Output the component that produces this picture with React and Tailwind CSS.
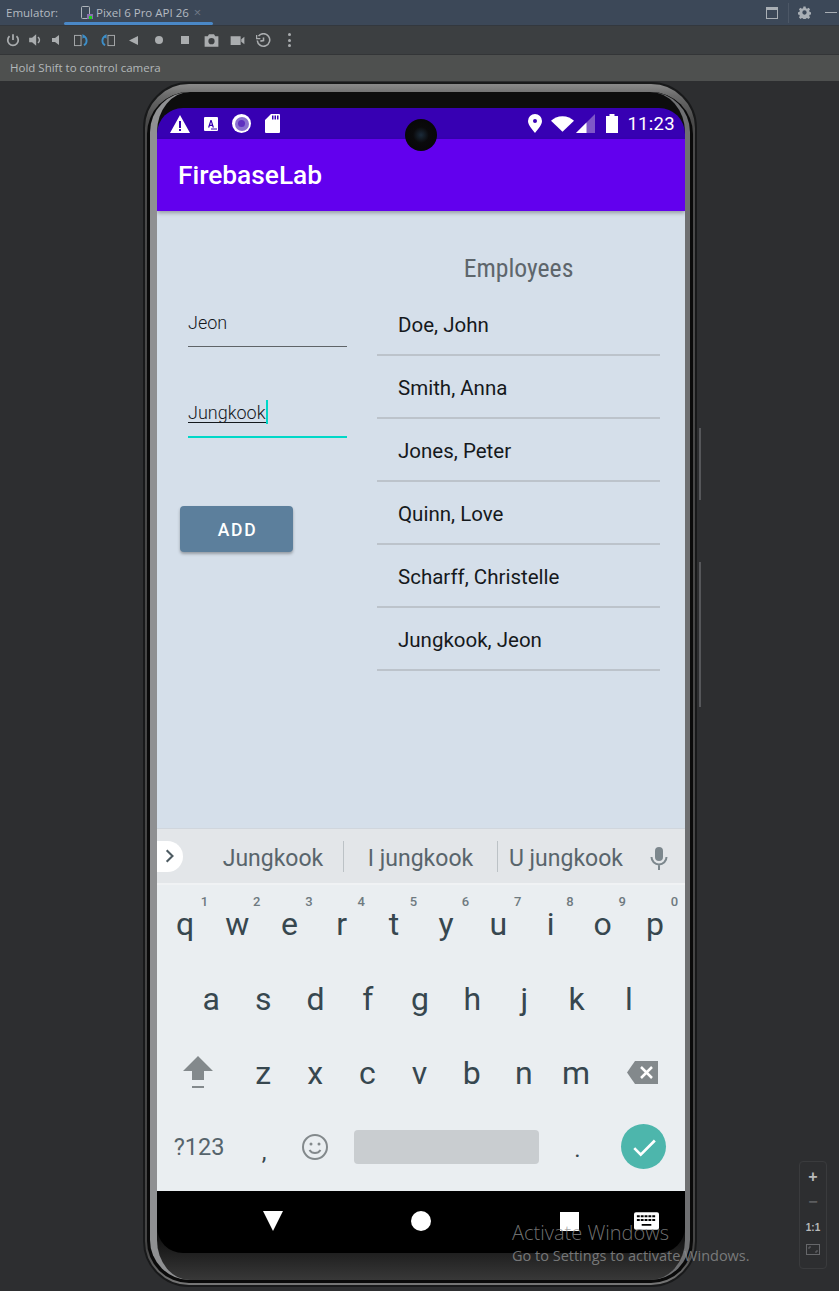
import React from 'react';

const KEYS_1 = [['q', 1], ['w', 2], ['e', 3], ['r', 4], ['t', 5], ['y', 6], ['u', 7], ['i', 8], ['o', 9], ['p', 0]];
const KEYS_2 = ['a', 's', 'd', 'f', 'g', 'h', 'j', 'k', 'l'];
const KEYS_3 = ['z', 'x', 'c', 'v', 'b', 'n', 'm'];
const EMPLOYEES = ['Doe, John', 'Smith, Anna', 'Jones, Peter', 'Quinn, Love', 'Scharff, Christelle', 'Jungkook, Jeon'];

function TopBars() {
  return (
    <div className="font-['Open_Sans',sans-serif]">
      <div className="h-[26px] bg-[#3c4858] border-b border-[#33383e] flex items-center text-[11.5px] text-[#b4bac1]">
        <span className="ml-[6px] w-[58px]">Emulator:</span>
        <div className="relative h-[25px] w-[149px] flex items-center pl-[16px]">
          <svg viewBox="0 0 14 14" className="w-[14px] h-[14px] text-[#aeb4ba]">
            <rect x="1.5" y="0.5" width="8" height="12" rx="1" fill="none" stroke="currentColor" />
            <rect x="7" y="8" width="6" height="5" fill="#8b6fb0" />
            <rect x="9" y="10" width="3" height="3" fill="#19d119" />
          </svg>
          <span className="ml-[2px] whitespace-nowrap">Pixel 6 Pro API 26</span>
          <span className="ml-[5px] text-[#6f7986] text-[13px] leading-none">×</span>
          <div className="absolute left-0 right-0 bottom-0 h-[3px] rounded-sm bg-[#4a88c7]" />
        </div>
        <div className="ml-auto flex items-center text-[#a9afb5]">
          <svg viewBox="0 0 12 12" className="w-[12px] h-[12px] mr-[10px]"><rect x="0.5" y="0.5" width="11" height="11" fill="none" stroke="currentColor" /><rect x="0" y="0" width="12" height="3" fill="currentColor" /></svg>
          <div className="w-px h-[20px] bg-[#4c5766] mr-[9px]" />
          <svg viewBox="0 0 24 24" className="w-[13px] h-[13px] mr-[14px]" fill="currentColor"><path fillRule="evenodd" d="M10 1h4l.6 3 2.2.9 2.6-1.700 2.900 2.900-1.700 2.600.9 2.200 3 .6v4l-3 .6-.9 2.200 1.700 2.600-2.900 2.900-2.600-1.700-2.200.9-.6 3h-4l-.6-3-2.200-.9-2.600 1.700-2.900-2.900 1.700-2.600-.9-2.200-3-.6v-4l3-.6.9-2.200-1.700-2.600 2.900-2.900 2.600 1.700 2.200-.9zM12 8a4 4 0 1 0 0 8 4 4 0 0 0 0-8z" /></svg>
          <div className="w-[12px] h-[1.5px] bg-current mr-[2px]" />
        </div>
      </div>
      <div className="h-[29px] bg-[#3c3f41] border-b border-[#333537] flex items-center pl-[2px] text-[#aaadaf]">
        <div className="w-[22px] flex justify-center">
          <svg viewBox="0 0 24 24" className="w-[14px] h-[14px]"><path d="M12 2v10M6 5.500a9 9 0 1 0 12 0" fill="none" stroke="currentColor" strokeWidth="3" /></svg>
        </div>
        <div className="w-[22px] flex justify-center">
          <svg viewBox="0 0 24 24" className="w-[14px] h-[14px]" fill="currentColor"><path d="M2 8h5l7-6v20l-7-6H2z" /><path d="M17 7a6 6 0 0 1 0 10" fill="none" stroke="currentColor" strokeWidth="2.500" /></svg>
        </div>
        <div className="w-[22px] flex justify-center">
          <svg viewBox="0 0 24 24" className="w-[12px] h-[14px]" fill="currentColor"><path d="M2 8h6l8-6v20l-8-6H2z" /></svg>
        </div>
        <div className="w-[26px] flex justify-center">
          <svg viewBox="0 0 16 14" className="w-[15px] h-[13px]"><rect x="0.5" y="1.500" width="7" height="11" fill="none" stroke="currentColor" /><path d="M10.500 2.500c4 1.500 4 8 0 9.500" fill="none" stroke="#3d8fc9" strokeWidth="2" /><path d="M9 0l3.500 2.500L9 5z" fill="#3d8fc9" /></svg>
        </div>
        <div className="w-[26px] flex justify-center">
          <svg viewBox="0 0 16 14" className="w-[15px] h-[13px]"><rect x="8.500" y="1.500" width="7" height="11" fill="none" stroke="currentColor" /><path d="M5.500 2.500c-4 1.500-4 8 0 9.500" fill="none" stroke="#3d8fc9" strokeWidth="2" /><path d="M7 0L3.500 2.500 7 5z" fill="#3d8fc9" /></svg>
        </div>
        <div className="w-[26px] flex justify-center"><svg viewBox="0 0 10 10" className="w-[9px] h-[9px]" fill="currentColor"><path d="M10 0v10L0 5z" /></svg></div>
        <div className="w-[26px] flex justify-center"><div className="w-[8px] h-[8px] rounded-full bg-current" /></div>
        <div className="w-[26px] flex justify-center"><div className="w-[8px] h-[8px] bg-current" /></div>
        <div className="w-[26px] flex justify-center">
          <svg viewBox="0 0 24 24" className="w-[15px] h-[15px]" fill="currentColor"><path fillRule="evenodd" d="M8 2h8l2 3h5v17H1V5h5zM12 8a5 5 0 1 0 0 10 5 5 0 0 0 0-10z" /></svg>
        </div>
        <div className="w-[26px] flex justify-center">
          <svg viewBox="0 0 24 24" className="w-[15px] h-[15px]" fill="currentColor"><path d="M1 5h16v14H1zM18 10l5-4v12l-5-4z" /></svg>
        </div>
        <div className="w-[26px] flex justify-center">
          <svg viewBox="0 0 24 24" className="w-[15px] h-[15px]" fill="none" stroke="currentColor" strokeWidth="2.500"><path d="M4 5a10 10 0 1 1-2 7" /><path d="M12 7v5l-5 1" /><path d="M1 3v6h6" strokeWidth="2" /></svg>
        </div>
        <div className="w-[26px] flex flex-col items-center gap-[2.5px]">
          <div className="w-[3px] h-[3px] rounded-full bg-current" />
          <div className="w-[3px] h-[3px] rounded-full bg-current" />
          <div className="w-[3px] h-[3px] rounded-full bg-current" />
        </div>
      </div>
      <div className="h-[26px] bg-[#4e504f] flex items-center pl-[10px] text-[11.5px] text-[#b3b8ba]">Hold Shift to control camera</div>
    </div>
  );
}

function StatusBar() {
  return (
    <div className="h-[31px] bg-[#3700b3] flex items-center text-white pl-[13px] pr-[10px]">
      <svg viewBox="0 0 20 18" className="w-[20px] h-[18px]" fill="white"><path fillRule="evenodd" d="M10 0l10 18H0zM9 6v7h2V6zM9 14v2h2v-2z" /></svg>
      <svg viewBox="0 0 14 14" className="w-[14px] h-[14px] ml-[14px]"><rect width="14" height="14" rx="1" fill="white" /><path d="M4 10.500L6.400 3h1.200L10 10.500H8.600L8.200 9H5.800l-.4 1.500zM6.200 7.800h1.600L7 5z" fill="#3700b3" /><rect x="7" y="11.500" width="6" height="1" fill="#3700b3" /></svg>
      <div className="w-[19px] h-[19px] rounded-full bg-white ml-[14px] flex items-center justify-center">
        <div className="w-[14px] h-[14px] rounded-full bg-[#8a6fd0] flex items-center justify-center"><div className="w-[7px] h-[7px] rounded-full bg-[#5f2fc0]" /></div>
      </div>
      <svg viewBox="0 0 15 19" className="w-[15px] h-[19px] ml-[14px]" fill="white"><path fillRule="evenodd" d="M6 0h8a1 1 0 0 1 1 1v17a1 1 0 0 1-1 1H1a1 1 0 0 1-1-1V6zM7 1.500v4h1.500v-4zM9.500 1.500v4H11v-4zM12 1.500v4h1.500v-4z" /></svg>
      <div className="ml-auto flex items-center">
        <svg viewBox="0 0 14 19" className="w-[14px] h-[19px]" fill="white"><path fillRule="evenodd" d="M7 0a7 7 0 0 1 7 7c0 4-4 8-7 12C4 15 0 11 0 7a7 7 0 0 1 7-7zM7 5a2 2 0 1 0 0 4 2 2 0 0 0 0-4z" /></svg>
        <svg viewBox="0 0 24 16" className="w-[23px] h-[16px] ml-[9px]" fill="white"><path d="M0 4.500C3 2 7 0 12 0s9 2 12 4.500L12 16z" /></svg>
        <svg viewBox="0 0 19 19" className="w-[19px] h-[19px] ml-[2px]"><path d="M19 0v19H0z" fill="#7e57c8" /><path d="M10.500 8.500V19H0z" fill="white" /></svg>
        <svg viewBox="0 0 12 19" className="w-[12px] h-[19px] ml-[11px]" fill="white"><path d="M3.500 0h5v2H12v17H0V2h3.500z" /></svg>
        <span className="ml-[9px] pt-[2px] font-['Roboto',sans-serif] text-[18.500px] leading-none tracking-[0.3px]">11:23</span>
      </div>
    </div>
  );
}

function AppContent() {
  return (
    <div className="h-[617px] bg-[#d5dfea] flex font-['Roboto',sans-serif]">
      <div className="w-[220px] shrink-0">
        <div className="ml-[31px] mt-[92px] w-[159px] h-[44px] border-b border-[#5f6468] flex items-end pb-[14px] text-[18px] font-light text-[#14181c] leading-none">Jeon</div>
        <div className="ml-[31px] mt-[46px] w-[159px] h-[45px] border-b-2 border-[#00d8c8] flex items-end pb-[13px] text-[18px] font-light text-[#14181c] leading-none">
          <span className="border-b border-[#14181c]">Jungkook</span>
          <span className="w-[2px] h-[24px] bg-[#00d8c8] -mb-[1px]" />
        </div>
        <div className="ml-[23px] mt-[68px] w-[113px] h-[46px] pt-[2px] pl-[2px] rounded-[4px] bg-[#5c7f9c] shadow-[0_2px_3px_rgba(0,0,0,0.3)] flex items-center justify-center text-white text-[17.500px] font-medium tracking-[1.700px]">ADD</div>
      </div>
      <div className="w-[283px] pt-[37px]">
        <div className="text-center text-[25.700px] leading-[40px] mb-[5px] text-[#5e666c] font-stretch-condensed">Employees</div>
        {EMPLOYEES.map(name => (
          <div key={name} className="h-[63px] border-b-2 border-[#bcc3cb] flex items-center pl-[21px] pt-[4px] text-[20.500px] text-[#15191c]">{name}</div>
        ))}
      </div>
    </div>
  );
}

function Keyboard() {
  const letter = 'flex-1 flex items-center justify-center text-[32px] leading-none text-[#37474f]';
  return (
    <div className="font-['Roboto',sans-serif]">
      <div className="h-[57px] bg-[#e3e6e9] border-t border-[#d0d6dd] border-b-2 border-b-[#f0f2f4] flex items-center relative text-[23px] text-[#59656c]">
        <div className="w-[26px] h-[31px] bg-white rounded-r-full flex items-center justify-center">
          <svg viewBox="0 0 12 16" className="w-[10px] h-[14px]" fill="none" stroke="#4d5a61" strokeWidth="2.500"><path d="M2 1l7 7-7 7" /></svg>
        </div>
        <span className="ml-[20px] w-[140px] text-center pt-[7px]">Jungkook</span>
        <div className="w-px h-[31px] bg-[#bcc2c6]" />
        <span className="w-[153px] text-center pt-[7px]">I jungkook</span>
        <div className="w-px h-[31px] bg-[#bcc2c6]" />
        <span className="ml-[11px] pt-[7px]">U jungkook</span>
        <svg viewBox="0 0 24 24" className="absolute right-[14px] top-[16px] w-[24px] h-[26px]" fill="#7c878d"><rect x="8" y="1" width="8" height="14" rx="4" /><path d="M4.500 11a7.500 7.500 0 0 0 15 0M12 18.500V24" fill="none" stroke="#7c878d" strokeWidth="2" /></svg>
      </div>
      <div className="h-[306px] bg-[#eaeef1] flex flex-col">
        <div className="h-[75px] flex pt-[2px] pl-[2px] pr-[4px]">
          {KEYS_1.map(([k, n]) => (
            <div key={k} className={`relative ${letter}`}>
              {k}
              <span className="absolute right-[3px] top-[8px] text-[13px] font-medium text-[#6f7a80]">{n}</span>
            </div>
          ))}
        </div>
        <div className="h-[75px] flex pt-[2px] pl-[28px] pr-[30px]">
          {KEYS_2.map(k => <div key={k} className={letter}>{k}</div>)}
        </div>
        <div className="h-[75px] flex items-center">
          <div className="w-[80px] flex justify-center pl-[2px]">
            <svg viewBox="0 0 30 34" className="w-[30px] h-[34px]" fill="#83898c"><path d="M15 0l15 15h-9v9H9v-9H0zM9 30h12v2H9z" /></svg>
          </div>
          {KEYS_3.map(k => <div key={k} className={`${letter} h-full`}>{k}</div>)}
          <div className="w-[83px] flex justify-center pl-[1px] pr-[2px]">
            <svg viewBox="0 0 31 23" className="w-[31px] h-[23px]"><path d="M8 0h23v23H8L0 11.500z" fill="#83898c" /><path d="M14 6l11 11M25 6L14 17" stroke="white" strokeWidth="2.500" /></svg>
          </div>
        </div>
        <div className="flex-1 flex items-start">
          <span className="w-[84px] text-center text-[23.500px] leading-[36px] mt-[19px] text-[#56646c]">?123</span>
          <span className="w-[46px] text-center text-[24px] leading-[36px] mt-[24px] text-[#37474f]">,</span>
          <div className="w-[54px] flex justify-center mt-[24px] pl-[2px]">
            <svg viewBox="0 0 26 26" className="w-[26px] h-[26px]" fill="none" stroke="#83898c" strokeWidth="2"><circle cx="13" cy="13" r="12" /><circle cx="9" cy="10" r="1.500" fill="#83898c" stroke="none" /><circle cx="17" cy="10" r="1.500" fill="#83898c" stroke="none" /><path d="M7.500 16a6.500 6.500 0 0 0 11 0" /></svg>
          </div>
          <div className="ml-[13px] w-[185px] h-[34px] bg-[#c9cdd0] rounded-[4px] mt-[20px]" />
          <span className="w-[77px] text-center text-[24px] leading-[36px] mt-[21px] text-[#37474f]">.</span>
          <div className="ml-[5px] w-[45px] h-[45px] rounded-full bg-[#4db6ac] flex items-center justify-center mt-[14px]">
            <svg viewBox="0 0 24 24" className="w-[26px] h-[26px]" fill="none" stroke="white" strokeWidth="2.500"><path d="M3 13l6 6L22 6" /></svg>
          </div>
        </div>
      </div>
      <div className="h-[62px] bg-black flex items-center pb-[2px]">
        <div className="w-[127px] shrink-0 flex justify-end">
          <svg viewBox="0 0 22 20" className="w-[22px] h-[20px]" fill="white"><path d="M1 0h20l-10 20z" /></svg>
        </div>
        <div className="ml-[127px] w-[20px] h-[20px] shrink-0 rounded-full bg-white" />
        <div className="ml-[129px] w-[19px] h-[19px] shrink-0 bg-white" />
        <svg viewBox="0 0 26 18" className="ml-[55px] w-[25px] h-[18px] shrink-0"><rect width="26" height="18" rx="2" fill="white" /><path d="M3 3h3v2H3zM7 3h3v2H7zM11 3h3v2h-3zM15 3h3v2h-3zM19 3h3v2h-3zM3 7h3v2H3zM7 7h3v2H7zM11 7h3v2h-3zM15 7h3v2h-3zM19 7h3v2h-3zM8 12h10v2H8z" fill="black" /></svg>
      </div>
    </div>
  );
}

function Phone() {
  return (
    <div className="relative ml-[143px] mt-[1px] w-[554px] h-[1205px] rounded-[46px] border-2 border-[#18191a] bg-[linear-gradient(#8a8a8a,#6a6a6a_1%,#4a4a4a_3%,#444_97%,#777)] pt-[8px] px-[2px] pb-[2px]">
      <div className="h-full rounded-[42px] border-x-[3px] border-b-[3px] border-[#0a0a0a] bg-[#0a0a0a]">
        <div className="h-full rounded-[40px] border-l-[7px] border-r-[5px] border-l-[#8f9092] border-r-[#6f7072] bg-[linear-gradient(#0d0d0d_96%,#383838)] pt-[16px]">
          <div className="w-[528px] rounded-[26px] overflow-hidden">
            <StatusBar />
            <div className="h-[72px] bg-[#6200ee] shadow-[0_2px_4px_rgba(0,0,0,0.3)] relative z-10 flex items-center pl-[21px] pt-[2px] text-white text-[26.300px] font-medium font-['Roboto',sans-serif]">FirebaseLab</div>
            <AppContent />
            <Keyboard />
          </div>
        </div>
      </div>
      {/* camera cut-out over the status bar */}
      <div className="absolute left-[260px] top-[35px] z-20 w-[32px] h-[32px] rounded-full bg-[radial-gradient(circle_at_50%_50%,#1b2b3a_0,#0a0a0c_35%,#050505_100%)]" />
      {/* side buttons */}
      <div className="absolute left-[554px] top-[344px] w-[2px] h-[72px] bg-[#56575a]" />
      <div className="absolute left-[554px] top-[478px] w-[2px] h-[145px] bg-[#56575a]" />
    </div>
  );
}

export default function App() {
  return (
    <div className="relative h-[1291px] w-[839px] overflow-hidden bg-[#2d2e30] font-['Liberation_Sans',sans-serif]">
      <TopBars />
      <Phone />
      <div className="absolute left-[512px] top-[1223px] z-30 font-['Open_Sans',sans-serif] text-[#8d8e8f]/80 leading-none">
        <div className="text-[20px] font-light mb-[6px]">Activate Windows</div>
        <div className="text-[14.500px]">Go to Settings to activate Windows.</div>
      </div>
      <div className="absolute left-[799px] top-[1161px] w-[28px] h-[108px] rounded-[4px] border border-[#3a3b3d] flex flex-col items-center text-[#b8b9ba] pt-[5px]">
        <span className="text-[16px] leading-[20px] font-bold">+</span>
        <span className="text-[16px] leading-[20px] mt-[5px] text-[#5c5d5f] font-bold">−</span>
        <span className="text-[10px] font-bold leading-[20px] mt-[6px]">1:1</span>
        <svg viewBox="0 0 14 11" className="w-[14px] h-[11px] mt-[6px]" fill="none" stroke="#66676a"><rect x="0.500" y="0.500" width="13" height="10" /><path d="M3 5V3h2M11 6v2H9" /></svg>
      </div>
    </div>
  );
}
